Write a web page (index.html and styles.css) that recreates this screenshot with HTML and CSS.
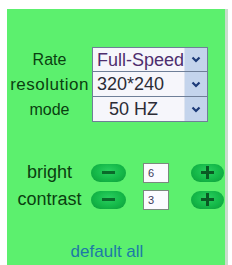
FILE: index.html
```html
<!DOCTYPE html>
<html>
<head>
<meta charset="utf-8">
<link rel="stylesheet" href="styles.css">
</head>
<body>
<div class="panel">
  <div class="form">
    <div class="label">Rate</div>
    <div class="select"><span class="value purple">Full-Speed</span><span class="btn"><svg width="10" height="7" viewBox="0 0 10 7"><path d="M1.5 1.5 L5 5 L8.5 1.5" fill="none" stroke="#1c3a78" stroke-width="2.2"/></svg></span></div>
    <div class="label wide">resolution</div>
    <div class="select"><span class="value">320*240</span><span class="btn"><svg width="10" height="7" viewBox="0 0 10 7"><path d="M1.5 1.5 L5 5 L8.5 1.5" fill="none" stroke="#1c3a78" stroke-width="2.2"/></svg></span></div>
    <div class="label">mode</div>
    <div class="select"><span class="value indent">50 HZ</span><span class="btn"><svg width="10" height="7" viewBox="0 0 10 7"><path d="M1.5 1.5 L5 5 L8.5 1.5" fill="none" stroke="#1c3a78" stroke-width="2.2"/></svg></span></div>
  </div>
  <div class="adjust">
    <div class="label big">bright</div>
    <div class="pill"><span class="minus"></span></div>
    <div class="box">6</div>
    <div class="pill plus-pill"><span class="plus"></span></div>
    <div class="label big">contrast</div>
    <div class="pill"><span class="minus"></span></div>
    <div class="box">3</div>
    <div class="pill plus-pill"><span class="plus"></span></div>
  </div>
  <div class="default">default all</div>
</div>
</body>
</html>
```
FILE: styles.css
```css
html, body {
  margin: 0;
  padding: 0;
  background: #ffffff;
}
body {
  width: 232px;
  height: 265px;
  overflow: hidden;
  font-family: "Liberation Sans", Arial, sans-serif;
}
.panel {
  margin: 9px 0 0 7px;
  width: 221px;
  height: 256px;
  background: #5cf06e;
  border-right: 3px solid #c9dccb;
  padding-top: 38px;
  box-sizing: border-box;
}
.form {
  display: grid;
  grid-template-columns: 83px 116px;
  grid-auto-rows: 25px;
  column-gap: 1px;
  margin-left: 1px;
}
.label {
  display: flex;
  align-items: center;
  justify-content: center;
  color: #0a3f10;
  font-size: 16px;
  white-space: nowrap;
}
.label.wide {
  font-size: 17px;
  letter-spacing: 0.5px;
}
.label.big {
  font-size: 18px;
}
.select {
  display: flex;
  border: 1px solid #6f7f98;
  margin-top: -1px;
  background: #f6f6fb;
  height: 26px;
  box-sizing: border-box;
}
.form .select:nth-child(2) { margin-top: 0; height: 25px; }
.value {
  flex: 1;
  overflow: hidden;
  white-space: nowrap;
  font-size: 18px;
  line-height: 24px;
  padding-left: 4px;
  color: #2c2c36;
}
.value.purple { color: #4e2e6e; }
.value.indent { padding-left: 16px; }
.btn {
  width: 22px;
  display: flex;
  align-items: center;
  justify-content: center;
  background: #c4d4ec;
  border-left: 1px solid #dde4f0;
}
.adjust {
  display: grid;
  grid-template-columns: 83px 35px 43px 55px;
  grid-auto-rows: 27px;
  margin-left: 1px;
  margin-top: 37px;
  align-items: center;
}
.adjust .pill { justify-self: start; }
.adjust .box { margin-left: 17px; }
.adjust .plus-pill { margin-left: 22px; }
.pill {
  width: 35px;
  height: 18px;
  border-radius: 9px;
  background: radial-gradient(ellipse at 50% 40%, #2ad060 0%, #14b848 55%, #0c9a3a 100%);
  display: flex;
  align-items: center;
  justify-content: center;
}
.plus-pill { width: 33px; }
.minus {
  width: 13px;
  height: 3px;
  background: #0a6a2a;
}
.plus {
  width: 13px;
  height: 13px;
  background:
    linear-gradient(#0a5a24, #0a5a24) center / 13px 3px no-repeat,
    linear-gradient(#0a5a24, #0a5a24) center / 3px 13px no-repeat;
}
.box {
  width: 26px;
  height: 20px;
  box-sizing: border-box;
  border: 1px solid #7a8a7e;
  background: #fbfbff;
  font-size: 11px;
  color: #3a3a5a;
  padding-left: 4px;
  line-height: 18px;
}
.default {
  width: 200px;
  text-align: center;
  margin-top: 29px;
  color: #1d7aa6;
  font-size: 17px;
}
```
